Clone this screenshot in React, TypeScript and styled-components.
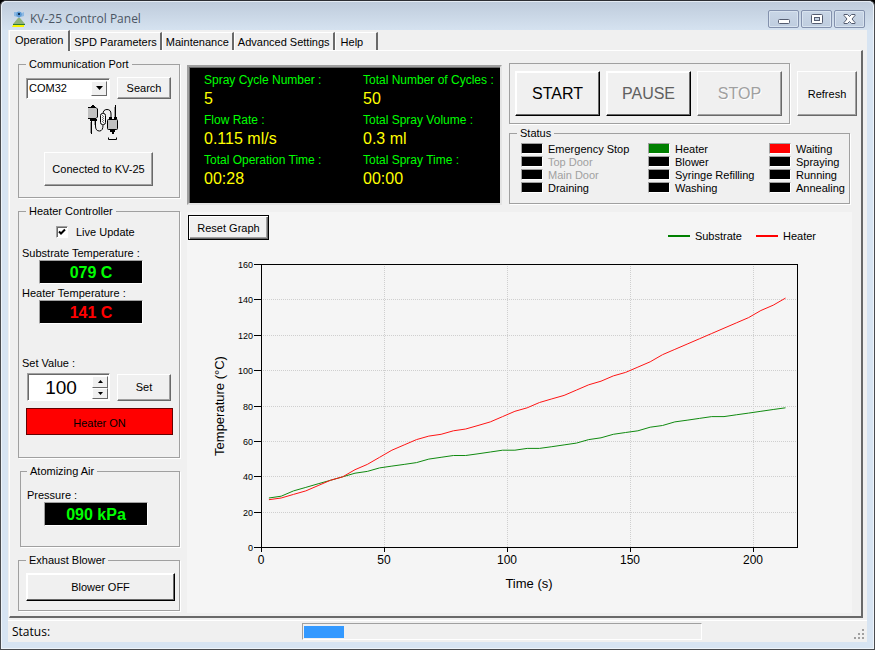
import React, { useState } from "react";
import styled, { createGlobalStyle, css } from "styled-components";

const face = "#f0f0f0";
const shade = "#a0a0a0";
const dark = "#696969";

const GlobalStyle = createGlobalStyle`
  *, *::before, *::after { box-sizing: border-box; }
  body {
    margin: 0;
    background: #000;
    color: #000;
    font: 11px/14px "Liberation Sans", Arial, sans-serif;
  }
  button, input, select { font: inherit; color: inherit; margin: 0; border-radius: 0; }
`;

const Window = styled.div`
  display: flex;
  flex-direction: column;
  min-height: 100vh;
  padding: 0 7px 7px;
  border: 1px solid #4a4c50;
  border-top-color: #2c2e33;
  border-radius: 6px 6px 0 0;
  background: #d7e4f2;
  box-shadow: inset 1px 1px 0 #eef4fa, inset -1px -1px 0 #eef4fa;
`;

const TitleBar = styled.header`
  display: flex;
  align-items: center;
  gap: 3px;
  height: 29px;
  margin: 0 -6px;
  padding: 6px 8px 0 9px;
  border-top: 1px solid #e4ebf3;
  border-radius: 5px 5px 0 0;
  background: linear-gradient(#bfccdc, #d5e2f0);
`;

const Title = styled.h1`
  flex: 1;
  margin: 0;
  color: #4b5563;
  font: 12px/16px "Open Sans", "Noto Sans", sans-serif;
`;

const CaptionButtons = styled.div`
  display: flex;
  gap: 2px;
`;

const CaptionButton = styled.button`
  display: grid;
  place-items: center;
  width: 31px;
  height: 18px;
  padding: 0;
  border: 1px solid #8391ad;
  border-radius: 2px;
  background: linear-gradient(#c9d6e6, #bfcddf);
  box-shadow: inset 0 0 0 1px #d8e3ef;
`;

const Client = styled.div`
  display: flex;
  flex: 1;
  flex-direction: column;
  background: ${face};
`;

const TabList = styled.div`
  display: flex;
  align-items: flex-end;
  height: 20px;
  padding-left: 1px;
`;

const Tab = styled.button<{ $active?: boolean }>`
  height: 18px;
  padding: 0 3px;
  border: 0;
  border-top: 1px solid #fff;
  border-left: 1px solid #fff;
  border-right: 2px solid ${dark};
  background: ${face};
  white-space: nowrap;
  &:last-child { padding: 0 13px 0 5px; }
  ${(p) =>
    p.$active &&
    css`
      height: 21px;
      margin-bottom: -1px;
      padding: 0 5px 3px;
      z-index: 1;
    `}
`;

const Page = styled.main`
  display: flex;
  flex: 1;
  gap: 7px;
  margin: 0 4px 0 1px;
  padding: 6px 9px 3px 8px;
  border-top: 1px solid #fff;
  border-left: 1px solid #fff;
  border-right: 2px solid ${dark};
  border-bottom: 2px solid ${dark};
`;

const Sidebar = styled.div`
  display: flex;
  flex-direction: column;
  flex: 0 0 162px;
`;

const Workspace = styled.div`
  display: flex;
  flex: 1;
  flex-direction: column;
  gap: 7px;
  min-width: 0;
`;

const Group = styled.fieldset`
  display: flex;
  flex-direction: column;
  min-width: 0;
  margin: 0;
  padding: 0;
  border: 1px solid ${shade};
  box-shadow: 1px 1px 0 #fff;
`;

const GroupLabel = styled.legend`
  padding: 0 3px;
  background: ${face};
`;

const PortGroup = styled(Group)`
  align-items: center;
  margin-bottom: 6px;
  padding: 6px 8px 11px 7px;
`;

const HeaterGroup = styled(Group)`
  margin-bottom: 6px;
  padding: 7px 6px 22px 7px;
`;

const AirGroup = styled(Group)`
  margin: 0 0 6px 2px;
  padding: 10px 6px 20px;
`;

const ExhaustGroup = styled(Group)`
  padding: 6px 4px 9px 7px;
`;

const Button = styled.button<{ $height: number; $strong?: boolean }>`
  height: ${(p) => p.$height}px;
  padding: 0;
  border: 1px solid;
  border-color: #fff ${dark} ${dark} #fff;
  background: ${face};
  box-shadow: inset -1px -1px 0 ${shade};
  ${(p) =>
    p.$strong &&
    css`
      border-color: #fff #000 #000 #fff;
      box-shadow: inset -1px -1px 0 ${dark}, inset 1px 1px 0 #fff;
    `}
  &:active { border-color: ${dark} #fff #fff ${dark}; }
`;

const FieldRow = styled.div`
  display: flex;
  align-items: center;
  gap: 7px;
  width: 100%;
`;

const SetRow = styled(FieldRow)`
  padding-right: 2px;
`;

const SideButton = styled(Button)`
  width: 54px;
`;

const ConnectButton = styled(Button)`
  width: 109px;
  margin-top: 11px;
`;

const sunken = css`
  border: 1px solid;
  border-color: ${shade} #fff #fff ${shade};
  box-shadow: inset 1px 1px 0 ${dark};
`;

const Combo = styled.div`
  display: flex;
  flex: 1;
  height: 21px;
  padding: 2px;
  background: #fff;
  ${sunken}
`;

const ComboSelect = styled.select`
  flex: 1;
  min-width: 0;
  padding: 0;
  border: 0;
  outline: 0;
  appearance: none;
  background: transparent;
`;

const ArrowBox = styled.span`
  display: grid;
  place-items: center;
  width: 16px;
  border: 1px solid;
  border-color: #fff ${dark} ${dark} #fff;
  background: ${face};
`;

const PortIcon = styled.svg`
  margin-top: 6px;
  margin-left: 10px;
`;

const CheckRow = styled.label`
  display: flex;
  align-items: center;
  gap: 8px;
  height: 14px;
  margin-left: 30px;
`;

const CheckBox = styled.input`
  width: 12px;
  height: 12px;
  appearance: none;
  background: #fff;
  ${sunken}
  &:checked {
    background: #fff url("data:image/svg+xml,%3Csvg xmlns='http://www.w3.org/2000/svg' viewBox='0 0 10 10'%3E%3Cpath d='M2 4.5l2 2 4-4' fill='none' stroke='%23000' stroke-width='2'/%3E%3C/svg%3E") center / 10px no-repeat;
  }
`;

const Reading = styled.div<{ $top: number; $left?: number }>`
  display: flex;
  flex-direction: column;
  margin: ${(p) => p.$top}px 0 0 ${(p) => p.$left ?? 0}px;
`;

const ReadingLabel = styled.span`
  margin-left: -4px;
`;

const Readout = styled.output<{ $color: string }>`
  width: 104px;
  margin-left: 13px;
  padding-top: 2px;
  border: 1px solid;
  border-color: ${shade} #fff #fff ${shade};
  background: #000;
  color: ${(p) => p.$color};
  font-size: 16px;
  font-weight: bold;
  line-height: 20px;
  text-align: center;
`;

const SetLabel = styled.label`
  margin: 32px 0 3px -4px;
`;

const Spinner = styled.div`
  display: grid;
  grid-template-columns: 1fr 16px;
  grid-template-rows: 1fr 1fr;
  flex: 1;
  height: 28px;
  min-width: 0;
  margin-left: 1px;
  padding: 2px 1px 1px 2px;
  background: #fff;
  ${sunken}
`;

const SpinnerInput = styled.input`
  grid-row: 1 / 3;
  min-width: 0;
  width: 100%;
  padding: 0;
  border: 0;
  outline: 0;
  background: transparent;
  font-size: 19px;
  text-align: center;
`;

const SpinButton = styled.button`
  display: grid;
  place-items: center;
  padding: 0;
  border: 1px solid;
  border-color: #fff ${dark} ${dark} #fff;
  background: ${face};
`;

const HeaterToggle = styled.button`
  height: 27px;
  margin-top: 7px;
  padding: 2px 0 0;
  border: 1px solid #600;
  background: #f00;
`;

const TopRow = styled.div`
  display: flex;
  gap: 7px;
`;

const Display = styled.dl`
  display: grid;
  grid-template-columns: 159px 1fr;
  align-content: start;
  row-gap: 2px;
  flex: 0 0 315px;
  margin: 8px 0 0;
  padding: 5px 0 13px 15px;
  border: 2px solid;
  border-color: ${shade} #e3e3e3 #e3e3e3 ${shade};
  background: #000;
  box-shadow: inset 1px 1px 0 ${dark};
`;

const DisplayItem = styled.div`
  white-space: nowrap;
`;

const DisplayLabel = styled.dt`
  color: #0f0;
  font-size: 12px;
  line-height: 16px;
`;

const DisplayValue = styled.dd`
  margin: 0;
  color: #ff0;
  font-size: 16px;
  line-height: 22px;
`;

const Controls = styled.div`
  display: flex;
  flex: 1;
  flex-direction: column;
  gap: 2px;
  min-width: 0;
  margin-right: -5px;
  padding-top: 6px;
`;

const ControlRow = styled.div`
  display: flex;
  align-items: center;
  gap: 7px;
`;

const RunBox = styled.div`
  display: grid;
  grid-template-columns: repeat(3, 1fr);
  flex: 1;
  gap: 6px;
  padding: 7px 7px 7px 5px;
  border: 1px solid ${shade};
  box-shadow: 1px 1px 0 #fff;
`;

const RunButton = styled(Button)<{ $tone: string }>`
  color: ${(p) => p.$tone};
  font-size: 16px;
  &:disabled { text-shadow: 1px 1px 0 #fff; }
`;

const RefreshButton = styled(Button)`
  width: 60px;
`;

const StatusGroup = styled(Group)`
  margin-right: 7px;
  padding: 2px 4px 9px 7px;
`;

const Lamps = styled.div`
  display: grid;
  grid-template-columns: 127px 121px 1fr;
  padding-left: 4px;
`;

const LampColumn = styled.ul`
  margin: 0;
  padding: 0;
  list-style: none;
`;

const LampRow = styled.li<{ $dim?: boolean }>`
  display: flex;
  align-items: center;
  gap: 5px;
  height: 13px;
  color: ${(p) => (p.$dim ? shade : "#000")};
  white-space: nowrap;
`;

const Lamp = styled.span<{ $color: string }>`
  width: 22px;
  height: 11px;
  border: 1px solid;
  border-color: ${shade} #fff #fff ${shade};
  background: ${(p) => p.$color};
`;

const ChartPanel = styled.section`
  flex: 1;
  padding: 3px 0 0;
  background: #f5f5f5;
`;

const ChartHeader = styled.div`
  display: flex;
  justify-content: space-between;
  height: 28px;
  padding: 0 36px 0 1px;
`;

const ResetButton = styled.button`
  width: 81px;
  height: 25px;
  padding: 0;
  border: 1px solid #000;
  background: ${face};
  box-shadow: inset 1px 1px 0 #fff, inset -1px -1px 0 ${dark}, inset -2px -2px 0 ${shade};
`;

const Legend = styled.div`
  display: flex;
  align-items: flex-end;
  gap: 14px;
`;

const LegendItem = styled.span<{ $color: string }>`
  display: flex;
  align-items: center;
  gap: 5px;
  &::before {
    content: "";
    width: 22px;
    height: 2px;
    background: ${(p) => p.$color};
  }
`;

const Chart = styled.svg`
  display: block;
  width: 100%;
  height: auto;
`;

const StatusBar = styled.footer`
  display: grid;
  grid-template-columns: 290px 400px 1fr;
  align-items: center;
  height: 22px;
  margin-top: 2px;
  padding: 0 2px 0 4px;
  border-top: 1px solid #fff;
  font: 12px/16px "Open Sans", "Noto Sans", sans-serif;
`;

const Progress = styled.div`
  height: 17px;
  padding: 2px 1px;
  border: 1px solid;
  border-color: ${shade} #fff #fff ${shade};
`;

const ProgressFill = styled.div`
  height: 12px;
  background: #39f;
`;

const Grip = styled.svg`
  align-self: end;
  justify-self: end;
  margin-bottom: 2px;
`;

const substrate = [
  28, 29, 32, 34, 36, 38, 40, 42, 43, 45, 46, 47, 48, 50, 51, 52, 52, 53, 54, 55, 55, 56,
  56, 57, 58, 59, 61, 62, 64, 65, 66, 68, 69, 71, 72, 73, 74, 74, 75, 76, 77, 78, 79,
];
const heater = [
  27, 28, 30, 32, 35, 38, 40, 44, 47, 51, 55, 58, 61, 63, 64, 66, 67, 69, 71, 74, 77, 79,
  82, 84, 86, 89, 92, 94, 97, 99, 102, 105, 109, 112, 115, 118, 121, 124, 127, 130, 134,
  137, 141,
];

const plot = { left: 74, right: 610, top: 21, bottom: 304 };
const xAt = (t: number) => plot.left + t * 2.46;
const yAt = (v: number) => plot.bottom - (v * (plot.bottom - plot.top)) / 160;
const snap = (n: number) => Math.round(n) + 0.5;
const trace = (values: number[]) =>
  values.map((v, i) => `${(xAt(3 + i * 5) + 0.5).toFixed(1)},${(yAt(v) + 0.5).toFixed(1)}`).join(" ");

const yTicks = [0, 20, 40, 60, 80, 100, 120, 140, 160];
const xTicks = [0, 50, 100, 150, 200];

function TemperatureChart() {
  return (
    <Chart viewBox="0 0 665 369" role="img" aria-label="Temperature over time">
      <g stroke="#cfcfcf" strokeDasharray="1 1">
        {yTicks.slice(1, -1).map((v) => (
          <line key={v} x1={plot.left + 2} x2={plot.right} y1={snap(yAt(v))} y2={snap(yAt(v))} />
        ))}
        {xTicks.slice(1).map((t) => (
          <line key={t} x1={snap(xAt(t))} x2={snap(xAt(t))} y1={plot.top + 2} y2={plot.bottom} />
        ))}
      </g>
      <g stroke="#000">
        {yTicks.map((v) => (
          <line key={v} x1={plot.left - 7} x2={plot.left} y1={snap(yAt(v))} y2={snap(yAt(v))} />
        ))}
        {xTicks.map((t) => (
          <line key={t} x1={snap(xAt(t))} x2={snap(xAt(t))} y1={plot.bottom} y2={plot.bottom + 5} />
        ))}
        <rect
          x={plot.left + 0.5}
          y={plot.top + 0.5}
          width={plot.right - plot.left}
          height={plot.bottom - plot.top}
          fill="none"
        />
      </g>
      <polyline points={trace(substrate)} fill="none" stroke="#108a10" />
      <polyline points={trace(heater)} fill="none" stroke="#ff1414" />
      <g fontSize="9" textAnchor="end">
        {yTicks.map((v) => (
          <text key={v} x={plot.left - 8} y={Math.round(yAt(v)) + 4}>{v}</text>
        ))}
      </g>
      <g fontSize="12" textAnchor="middle">
        {xTicks.map((t) => (
          <text key={t} x={Math.round(xAt(t))} y={plot.bottom + 17}>{t}</text>
        ))}
      </g>
      <g fontSize="13" textAnchor="middle">
        <text x="342" y="345">Time (s)</text>
        <text transform="translate(37 163) rotate(-90)">Temperature (°C)</text>
      </g>
    </Chart>
  );
}

function AppIcon() {
  return (
    <svg width="16" height="18" viewBox="0 0 16 18" aria-hidden="true">
      <path d="M3 2h3l2-1 3 2 2-1v4l-3 1H6L3 6z" fill="#8db9e3" />
      <path d="M6 2h4l1 3-3 3-3-3z" fill="#5d9bd6" />
      <rect x="7" y="3" width="2" height="2" fill="#143459" />
      <path d="M7 8h2l5 6H2z" fill="#8fb07b" />
      <path d="M2 14h12v1H2z" fill="#2f7d32" />
      <path d="M2 15h11v2H1z" fill="#f8f400" />
    </svg>
  );
}

function CableIcon() {
  return (
    <PortIcon width="32" height="36" viewBox="0 0 32 36" aria-hidden="true">
      <g fill="none" stroke="#000">
        <path d="M7.5 14v7q0 5 4 5q3.500 0 3.500-6" />
        <path d="M15 9q0-4.500 4-4.500t4 4.500v5" />
        <path d="M27.500 0v14M3.500 14v15M20.500 32.500v2h8v-2" />
      </g>
      <path d="M2.500 17v11M6.500 15v5M26.500 2v11" stroke="#999" />
      <path d="M3 1h4v2H3zM4 0h2v1H4z" />
      <path d="M0 3h9v10H0z" fill="#c0c0c0" />
      <path d="M0 2.500h8l1.500 1.500v8L8 13.500H0" fill="none" stroke="#000" />
      <path d="M2 14h7v2H2z" />
      <rect x="12.500" y="8.500" width="5" height="11" rx="2" fill="#f4f4f4" stroke="#000" />
      <path d="M14 10h1v1h-1zm1 1h1v1h-1zm-1 1h1v1h-1zm1 1h1v1h-1zm-1 1h1v1h-1zm1 1h1v1h-1zm-1 1h1v1h-1zm1 1h1v1h-1z" fill="#777" />
      <rect x="19.500" y="14.500" width="10" height="10" rx="1" fill="#c0c0c0" stroke="#000" />
      <path d="M21 12h3v2h-3zM26 12h3v2h-3zM22 25h5v2h-5zM24 27h2v2h-2z" />
    </PortIcon>
  );
}

function Triangle({ up = false, size = 7 }: { up?: boolean; size?: number }) {
  const h = (size + 1) / 2;
  return (
    <svg width={size} height={h} viewBox={`0 0 ${size} ${h}`} aria-hidden="true">
      <path d={up ? `M0 ${h}h${size}L${size / 2} 0z` : `M0 0h${size}L${size / 2} ${h}z`} />
    </svg>
  );
}

const tabs = ["Operation", "SPD Parameters", "Maintenance", "Advanced Settings", "Help"];

const metrics = [
  ["Spray Cycle Number :", "5"],
  ["Total Number of Cycles :", "50"],
  ["Flow Rate :", "0.115 ml/s"],
  ["Total Spray Volume :", "0.3 ml"],
  ["Total Operation Time :", "00:28"],
  ["Total Spray Time :", "00:00"],
];

const lampColumns: { label: string; color?: string; dim?: boolean }[][] = [
  [
    { label: "Emergency Stop" },
    { label: "Top Door", dim: true },
    { label: "Main Door", dim: true },
    { label: "Draining" },
  ],
  [
    { label: "Heater", color: "#008000" },
    { label: "Blower" },
    { label: "Syringe Refilling" },
    { label: "Washing" },
  ],
  [
    { label: "Waiting", color: "#f00" },
    { label: "Spraying" },
    { label: "Running" },
    { label: "Annealing" },
  ],
];

export default function App() {
  const [live, setLive] = useState(true);
  const [target, setTarget] = useState(100);
  const progress = 10;

  return (
    <>
      <GlobalStyle />
      <Window>
        <TitleBar>
          <AppIcon />
          <Title>KV-25 Control Panel</Title>
          <CaptionButtons>
            <CaptionButton aria-label="Minimize">
              <svg width="12" height="12" viewBox="0 0 12 12">
                <rect x="0.500" y="6.500" width="11" height="4" rx="1" fill="#fff" stroke="#545c70" />
              </svg>
            </CaptionButton>
            <CaptionButton aria-label="Maximize">
              <svg width="12" height="10" viewBox="0 0 12 10">
                <rect x="0.500" y="0.500" width="11" height="9" rx="1" fill="#fff" stroke="#545c70" />
                <rect x="3.500" y="3.500" width="5" height="3" fill="#c3d0e1" stroke="#545c70" />
              </svg>
            </CaptionButton>
            <CaptionButton aria-label="Close">
              <svg width="13" height="10" viewBox="0 0 13 10">
                <path
                  d="M1 .5h3.500l2 2 2-2H12v1L9 5l3 3.500v1H8.500l-2-2-2 2H1v-1L4 5 1 1.500z"
                  fill="#fff"
                  stroke="#545c70"
                />
              </svg>
            </CaptionButton>
          </CaptionButtons>
        </TitleBar>

        <Client>
          <TabList role="tablist">
            {tabs.map((name, i) => (
              <Tab key={name} role="tab" aria-selected={i === 0} $active={i === 0}>
                {name}
              </Tab>
            ))}
          </TabList>

          <Page>
            <Sidebar>
              <PortGroup>
                <GroupLabel>Communication Port</GroupLabel>
                <FieldRow>
                  <Combo>
                    <ComboSelect aria-label="Port" defaultValue="COM32">
                      <option>COM32</option>
                    </ComboSelect>
                    <ArrowBox><Triangle /></ArrowBox>
                  </Combo>
                  <SideButton $height={22}>Search</SideButton>
                </FieldRow>
                <CableIcon />
                <ConnectButton $height={34}>Conected to KV-25</ConnectButton>
              </PortGroup>

              <HeaterGroup>
                <GroupLabel>Heater Controller</GroupLabel>
                <CheckRow>
                  <CheckBox type="checkbox" checked={live} onChange={() => setLive(!live)} />
                  Live Update
                </CheckRow>
                <Reading $top={7}>
                  <ReadingLabel>Substrate Temperature :</ReadingLabel>
                  <Readout $color="#0f0">079 C</Readout>
                </Reading>
                <Reading $top={2}>
                  <ReadingLabel>Heater Temperature :</ReadingLabel>
                  <Readout $color="#f00">141 C</Readout>
                </Reading>
                <SetLabel htmlFor="target">Set Value :</SetLabel>
                <SetRow>
                  <Spinner>
                    <SpinnerInput
                      id="target"
                      inputMode="numeric"
                      value={target}
                      onChange={(e) => setTarget(Number(e.target.value) || 0)}
                    />
                    <SpinButton aria-label="Increase" onClick={() => setTarget(target + 1)}>
                      <Triangle up size={5} />
                    </SpinButton>
                    <SpinButton aria-label="Decrease" onClick={() => setTarget(target - 1)}>
                      <Triangle size={5} />
                    </SpinButton>
                  </Spinner>
                  <SideButton $height={27}>Set</SideButton>
                </SetRow>
                <HeaterToggle>Heater ON</HeaterToggle>
              </HeaterGroup>

              <AirGroup>
                <GroupLabel>Atomizing Air</GroupLabel>
                <Reading $top={0} $left={4}>
                  <ReadingLabel>Pressure :</ReadingLabel>
                  <Readout $color="#0f0">090 kPa</Readout>
                </Reading>
              </AirGroup>

              <ExhaustGroup>
                <GroupLabel>Exhaust Blower</GroupLabel>
                <Button $height={28} $strong>Blower OFF</Button>
              </ExhaustGroup>
            </Sidebar>

            <Workspace>
              <TopRow>
                <Display>
                  {metrics.map(([label, value]) => (
                    <DisplayItem key={label}>
                      <DisplayLabel>{label}</DisplayLabel>
                      <DisplayValue>{value}</DisplayValue>
                    </DisplayItem>
                  ))}
                </Display>

                <Controls>
                  <ControlRow>
                    <RunBox>
                      <RunButton $height={45} $strong $tone="#000">START</RunButton>
                      <RunButton $height={45} $strong $tone="#606060">PAUSE</RunButton>
                      <RunButton $height={45} $tone={shade} disabled>STOP</RunButton>
                    </RunBox>
                    <RefreshButton $height={45}>Refresh</RefreshButton>
                  </ControlRow>
                  <StatusGroup>
                    <GroupLabel>Status</GroupLabel>
                    <Lamps>
                      {lampColumns.map((column, i) => (
                        <LampColumn key={i}>
                          {column.map(({ label, color = "#000", dim }) => (
                            <LampRow key={label} $dim={dim}>
                              <Lamp $color={color} />
                              {label}
                            </LampRow>
                          ))}
                        </LampColumn>
                      ))}
                    </Lamps>
                  </StatusGroup>
                </Controls>
              </TopRow>

              <ChartPanel>
                <ChartHeader>
                  <ResetButton>Reset Graph</ResetButton>
                  <Legend>
                    <LegendItem $color="#008000">Substrate</LegendItem>
                    <LegendItem $color="#f00">Heater</LegendItem>
                  </Legend>
                </ChartHeader>
                <TemperatureChart />
              </ChartPanel>
            </Workspace>
          </Page>

          <StatusBar>
            <span>Status:</span>
            <Progress role="progressbar" aria-label="Status" aria-valuenow={progress}>
              <ProgressFill style={{ width: `${progress}%` }} />
            </Progress>
            <Grip width="11" height="11" viewBox="0 0 11 11" aria-hidden="true">
              <path
                d="M8 0h2v2H8zM4 4h2v2H4zM8 4h2v2H8zM0 8h2v2H0zM4 8h2v2H4zM8 8h2v2H8z"
                fill={shade}
              />
            </Grip>
          </StatusBar>
        </Client>
      </Window>
    </>
  );
}
